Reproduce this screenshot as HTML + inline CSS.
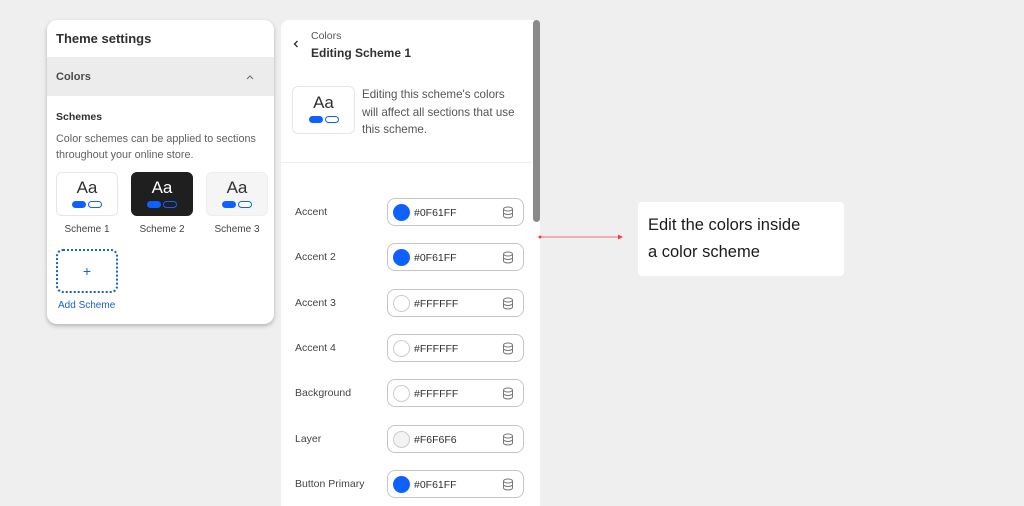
<!DOCTYPE html><html><head><style>
*{box-sizing:border-box;margin:0;padding:0}
body{width:1024px;height:506px;background:#efefef;font-family:"Liberation Sans",sans-serif;position:relative;overflow:hidden;color:#303030}
.a{position:absolute}
.lp{left:47px;top:20px;width:227px;height:304px;background:#fff;border-radius:10px;box-shadow:0 2px 4px rgba(0,0,0,.25);overflow:hidden}
.card{position:absolute;top:152px;width:62px;height:44px;border-radius:6px;border:1px solid #e6e6e6;text-align:center}
.card .t{font-size:17px;margin-top:5px;line-height:20px}
.pills{display:flex;justify-content:center;gap:2px;margin-top:3px}
.p1{width:14px;height:7px;border-radius:4px;background:#0f61ff}
.p2{width:14px;height:7px;border-radius:4px;border:1.3px solid #0f61ff;background:#fff}
.lbl{position:absolute;top:204px;font-size:10px;color:#444;width:62px;text-align:center}
.rp{left:281px;top:20px;width:259px;height:486px;background:#fff;border-radius:8px 8px 0 0}
.row{position:absolute;left:14px;width:230px;height:28px}
.row .n{position:absolute;left:0;top:8px;font-size:10.5px;color:#444}
.inp{position:absolute;left:92px;top:0;width:137px;height:28px;border:1px solid #c6c6c6;border-radius:8px}
.sw{position:absolute;left:5px;top:5px;width:17px;height:17px;border-radius:50%;background:#0f61ff}
.sw.w{background:#fff;border:1px solid #ccc}
.inp .v{position:absolute;left:26px;top:8px;font-size:10.5px;color:#303030}
.db{position:absolute;right:9px;top:7px}
</style></head><body>
<div class="a lp">
<div class="a" style="left:9px;top:11px;font-size:13px;font-weight:bold">Theme settings</div>
<div class="a" style="left:0;top:37px;width:227px;height:39px;background:#ececec"></div>
<div class="a" style="left:9px;top:51px;font-size:11px;font-weight:bold;color:#4a4a4a">Colors</div>
<svg class="a" style="left:198px;top:53px" width="10" height="8"><path d="M2 6L5 3L8 6" stroke="#777" stroke-width="1.2" fill="none"/></svg>
<div class="a" style="left:9px;top:91px;font-size:10.5px;font-weight:bold">Schemes</div>
<div class="a" style="left:9px;top:111px;font-size:10.8px;color:#616161;line-height:16px;width:215px">Color schemes can be applied to sections throughout your online store.</div>
<div class="card" style="left:9px"><div class="t">Aa</div><div class="pills"><div class="p1"></div><div class="p2"></div></div></div>
<div class="card" style="left:84px;background:#1f1f1f;border-color:#1f1f1f;color:#fff"><div class="t">Aa</div><div class="pills"><div class="p1"></div><div class="p2" style="background:#1f1f1f"></div></div></div>
<div class="card" style="left:159px;background:#f5f5f5;border-color:#eee"><div class="t">Aa</div><div class="pills"><div class="p1"></div><div class="p2"></div></div></div>
<div class="lbl" style="left:9px">Scheme 1</div><div class="lbl" style="left:84px">Scheme 2</div><div class="lbl" style="left:159px">Scheme 3</div>
<div class="a" style="left:9px;top:229px;width:62px;height:44px;border:2px dotted #1a5fd6;border-radius:7px;text-align:center;color:#1a5fd6;font-size:14px;line-height:40px">+</div>
<div class="a" style="left:11px;top:280px;font-size:10px;color:#1a5fd6">Add Scheme</div>
</div>
<div class="a rp">
<svg class="a" style="left:11px;top:19px" width="8" height="10"><path d="M5.5 2L2.5 5L5.5 8" stroke="#303030" stroke-width="1.4" fill="none"/></svg>
<div class="a" style="left:30px;top:10px;font-size:10.5px;color:#555">Colors</div>
<div class="a" style="left:30px;top:26px;font-size:12px;font-weight:bold">Editing Scheme 1</div>
<div class="a" style="left:11px;top:66px;width:63px;height:48px;border:1px solid #e6e6e6;border-radius:6px;text-align:center"><div style="font-size:17px;margin-top:6px;line-height:20px">Aa</div><div class="pills"><div class="p1"></div><div class="p2"></div></div></div>
<div class="a" style="left:81px;top:66px;font-size:11.6px;color:#555;line-height:17.5px;width:180px;white-space:nowrap">Editing this scheme's colors<br>will affect all sections that use<br>this scheme.</div>
<div class="a" style="left:0;top:142px;width:250px;height:1px;background:#ececec"></div>
<div class="a" style="left:252px;top:0;width:7px;height:202px;background:#8a8a8a;border-radius:4px"></div>
<div class="row" style="top:178px"><div class="n">Accent</div><div class="inp"><div class="sw"></div><div class="v">#0F61FF</div><svg class="db" width="12" height="13"><g stroke="#777" fill="none" stroke-width="1"><ellipse cx="6" cy="3" rx="4.5" ry="2"/><path d="M1.5 3v7c0 1 2 2 4.5 2s4.5-1 4.5-2V3M1.5 6.5c0 1 2 2 4.5 2s4.5-1 4.5-2"/></g></svg></div></div>
<div class="row" style="top:223px"><div class="n">Accent 2</div><div class="inp"><div class="sw"></div><div class="v">#0F61FF</div><svg class="db" width="12" height="13"><g stroke="#777" fill="none" stroke-width="1"><ellipse cx="6" cy="3" rx="4.5" ry="2"/><path d="M1.5 3v7c0 1 2 2 4.5 2s4.5-1 4.5-2V3M1.5 6.5c0 1 2 2 4.5 2s4.5-1 4.5-2"/></g></svg></div></div>
<div class="row" style="top:269px"><div class="n">Accent 3</div><div class="inp"><div class="sw w"></div><div class="v">#FFFFFF</div><svg class="db" width="12" height="13"><g stroke="#777" fill="none" stroke-width="1"><ellipse cx="6" cy="3" rx="4.5" ry="2"/><path d="M1.5 3v7c0 1 2 2 4.5 2s4.5-1 4.5-2V3M1.5 6.5c0 1 2 2 4.5 2s4.5-1 4.5-2"/></g></svg></div></div>
<div class="row" style="top:314px"><div class="n">Accent 4</div><div class="inp"><div class="sw w"></div><div class="v">#FFFFFF</div><svg class="db" width="12" height="13"><g stroke="#777" fill="none" stroke-width="1"><ellipse cx="6" cy="3" rx="4.5" ry="2"/><path d="M1.5 3v7c0 1 2 2 4.5 2s4.5-1 4.5-2V3M1.5 6.5c0 1 2 2 4.5 2s4.5-1 4.5-2"/></g></svg></div></div>
<div class="row" style="top:359px"><div class="n">Background</div><div class="inp"><div class="sw w"></div><div class="v">#FFFFFF</div><svg class="db" width="12" height="13"><g stroke="#777" fill="none" stroke-width="1"><ellipse cx="6" cy="3" rx="4.5" ry="2"/><path d="M1.5 3v7c0 1 2 2 4.5 2s4.5-1 4.5-2V3M1.5 6.5c0 1 2 2 4.5 2s4.5-1 4.5-2"/></g></svg></div></div>
<div class="row" style="top:405px"><div class="n">Layer</div><div class="inp"><div class="sw w" style="background:#f3f3f3"></div><div class="v">#F6F6F6</div><svg class="db" width="12" height="13"><g stroke="#777" fill="none" stroke-width="1"><ellipse cx="6" cy="3" rx="4.5" ry="2"/><path d="M1.5 3v7c0 1 2 2 4.5 2s4.5-1 4.5-2V3M1.5 6.5c0 1 2 2 4.5 2s4.5-1 4.5-2"/></g></svg></div></div>
<div class="row" style="top:450px"><div class="n">Button Primary</div><div class="inp"><div class="sw"></div><div class="v">#0F61FF</div><svg class="db" width="12" height="13"><g stroke="#777" fill="none" stroke-width="1"><ellipse cx="6" cy="3" rx="4.5" ry="2"/><path d="M1.5 3v7c0 1 2 2 4.5 2s4.5-1 4.5-2V3M1.5 6.5c0 1 2 2 4.5 2s4.5-1 4.5-2"/></g></svg></div></div>
</div>
<svg class="a" style="left:538px;top:233px" width="88" height="8"><path d="M2 4H84" stroke="#f07070" stroke-width="1"/><circle cx="2" cy="4" r="1.5" fill="#f04040"/><path d="M80 1.5L85 4L80 6.5Z" fill="#f04040"/></svg>
<div class="a" style="left:638px;top:202px;width:206px;height:74px;background:#fff;border-radius:4px;padding:10px 10px;font-size:16.5px;line-height:27px;color:#1a1a1a">Edit the colors inside<br>a color scheme</div>
</body></html>
